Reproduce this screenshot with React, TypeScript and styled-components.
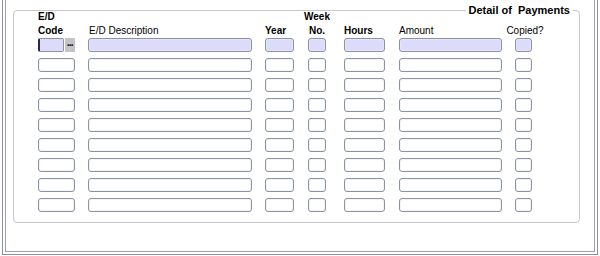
import React from "react";
import styled, { createGlobalStyle } from "styled-components";

const Global = createGlobalStyle`
  html, body { margin: 0; padding: 0; background: #ffffff; }
  body { font-family: "Liberation Sans", Arial, sans-serif; color: #000; }
`;

const OuterFrame = styled.div`
  box-sizing: border-box;
  margin-left: 2px;
  width: 596px;
  height: 255px;
  border: 1px solid #8c8ca2;
  border-top: none;
  padding: 0 2px 2px 2px;
`;

const InnerFrame = styled.div`
  box-sizing: border-box;
  height: 100%;
  border: 1px solid #9c9cb0;
  border-top: none;
  padding: 10px 0 0 7px;
`;

const Group = styled.div`
  position: relative;
  box-sizing: border-box;
  width: 567px;
  height: 213px;
  border: 1px solid #c8c8cc;
  border-radius: 4px;
  padding: 0 0 0 24px;
`;

const Legend = styled.div`
  position: absolute;
  top: -7px;
  right: 6px;
  padding: 0 3px;
  background: #ffffff;
  font-size: 11px;
  line-height: 13px;
  font-weight: bold;
  white-space: pre;
`;

const Header = styled.div`
  display: flex;
  height: 28px;
  margin-top: -1px;
`;

const HeadCell = styled.div<{ $w: number; $gap: number; $center?: boolean; $bold?: boolean; $pad?: number }>`
  width: ${(p) => p.$w}px;
  margin-left: ${(p) => p.$gap}px;
  padding-left: ${(p) => p.$pad ?? 0}px;
  box-sizing: border-box;
  display: flex;
  flex-direction: column;
  justify-content: flex-end;
  align-items: ${(p) => (p.$center ? "center" : "flex-start")};
  font-size: 10px;
  line-height: 14px;
  font-weight: ${(p) => (p.$bold ? "bold" : "normal")};
  white-space: nowrap;
`;

const Rows = styled.div`
  display: flex;
  flex-direction: column;
  gap: 6px;
`;

const Row = styled.div`
  display: flex;
  height: 14px;
`;

const Field = styled.div<{ $w: number; $gap: number; $active?: boolean }>`
  box-sizing: border-box;
  width: ${(p) => p.$w}px;
  margin-left: ${(p) => p.$gap}px;
  height: 14px;
  border: 1px solid #8a92a4;
  border-radius: 3px;
  background: ${(p) => (p.$active ? "#dcdcfa" : "#ffffff")};
  box-shadow: inset 0 0 0 1px ${(p) => (p.$active ? "#e6e6fb" : "#f4f4f8")};
`;

const CodeCell = styled.div<{ $w: number }>`
  display: flex;
  width: ${(p) => p.$w}px;
  gap: 1px;
`;

const CodeInput = styled.div`
  box-sizing: border-box;
  flex: 1;
  height: 14px;
  border: 1px solid #8a92a4;
  border-left: 2px solid #2a2a50;
  border-radius: 2px;
  background: #dcdcfa;
`;

const LovButton = styled.div`
  width: 10px;
  height: 14px;
  background: #c4c4c8;
  display: flex;
  align-items: center;
  justify-content: center;
  overflow: hidden;
`;

const Dots = styled.span`
  font-family: "DejaVu Sans", sans-serif;
  font-size: 9px;
  font-weight: bold;
  line-height: 9px;
  letter-spacing: -1.5px;
  color: #1a1a1a;
  margin-top: -4px;
  margin-left: -1px;
`;

type Col = { key: string; w: number; gap: number };

const COLS: Col[] = [
  { key: "code", w: 37, gap: 0 },
  { key: "desc", w: 164, gap: 13 },
  { key: "year", w: 29, gap: 13 },
  { key: "week", w: 18, gap: 14 },
  { key: "hours", w: 41, gap: 18 },
  { key: "amount", w: 103, gap: 14 },
  { key: "copied", w: 17, gap: 13 },
];

const ROWS = 9;

export default function App() {
  return (
    <>
      <Global />
      <OuterFrame>
        <InnerFrame>
          <Group>
            <Legend>Detail of  Payments</Legend>
            <Header>
              <HeadCell $w={37} $gap={0} $bold>
                <span>E/D</span>
                <span>Code</span>
              </HeadCell>
              <HeadCell $w={164} $gap={13} $pad={1}>
                <span>E/D Description</span>
              </HeadCell>
              <HeadCell $w={29} $gap={13} $bold>
                <span>Year</span>
              </HeadCell>
              <HeadCell $w={18} $gap={14} $bold $center>
                <span>Week</span>
                <span>No.</span>
              </HeadCell>
              <HeadCell $w={41} $gap={18} $bold>
                <span>Hours</span>
              </HeadCell>
              <HeadCell $w={103} $gap={14}>
                <span>Amount</span>
              </HeadCell>
              <HeadCell $w={17} $gap={13} $center $pad={3}>
                <span>Copied?</span>
              </HeadCell>
            </Header>
            <Rows>
              {Array.from({ length: ROWS }).map((_, r) => (
                <Row key={r}>
                  {COLS.map((c) =>
                    r === 0 && c.key === "code" ? (
                      <CodeCell key={c.key} $w={c.w}>
                        <CodeInput />
                        <LovButton>
                          <Dots>...</Dots>
                        </LovButton>
                      </CodeCell>
                    ) : (
                      <Field key={c.key} $w={c.w} $gap={c.gap} $active={r === 0} />
                    )
                  )}
                </Row>
              ))}
            </Rows>
          </Group>
        </InnerFrame>
      </OuterFrame>
    </>
  );
}
